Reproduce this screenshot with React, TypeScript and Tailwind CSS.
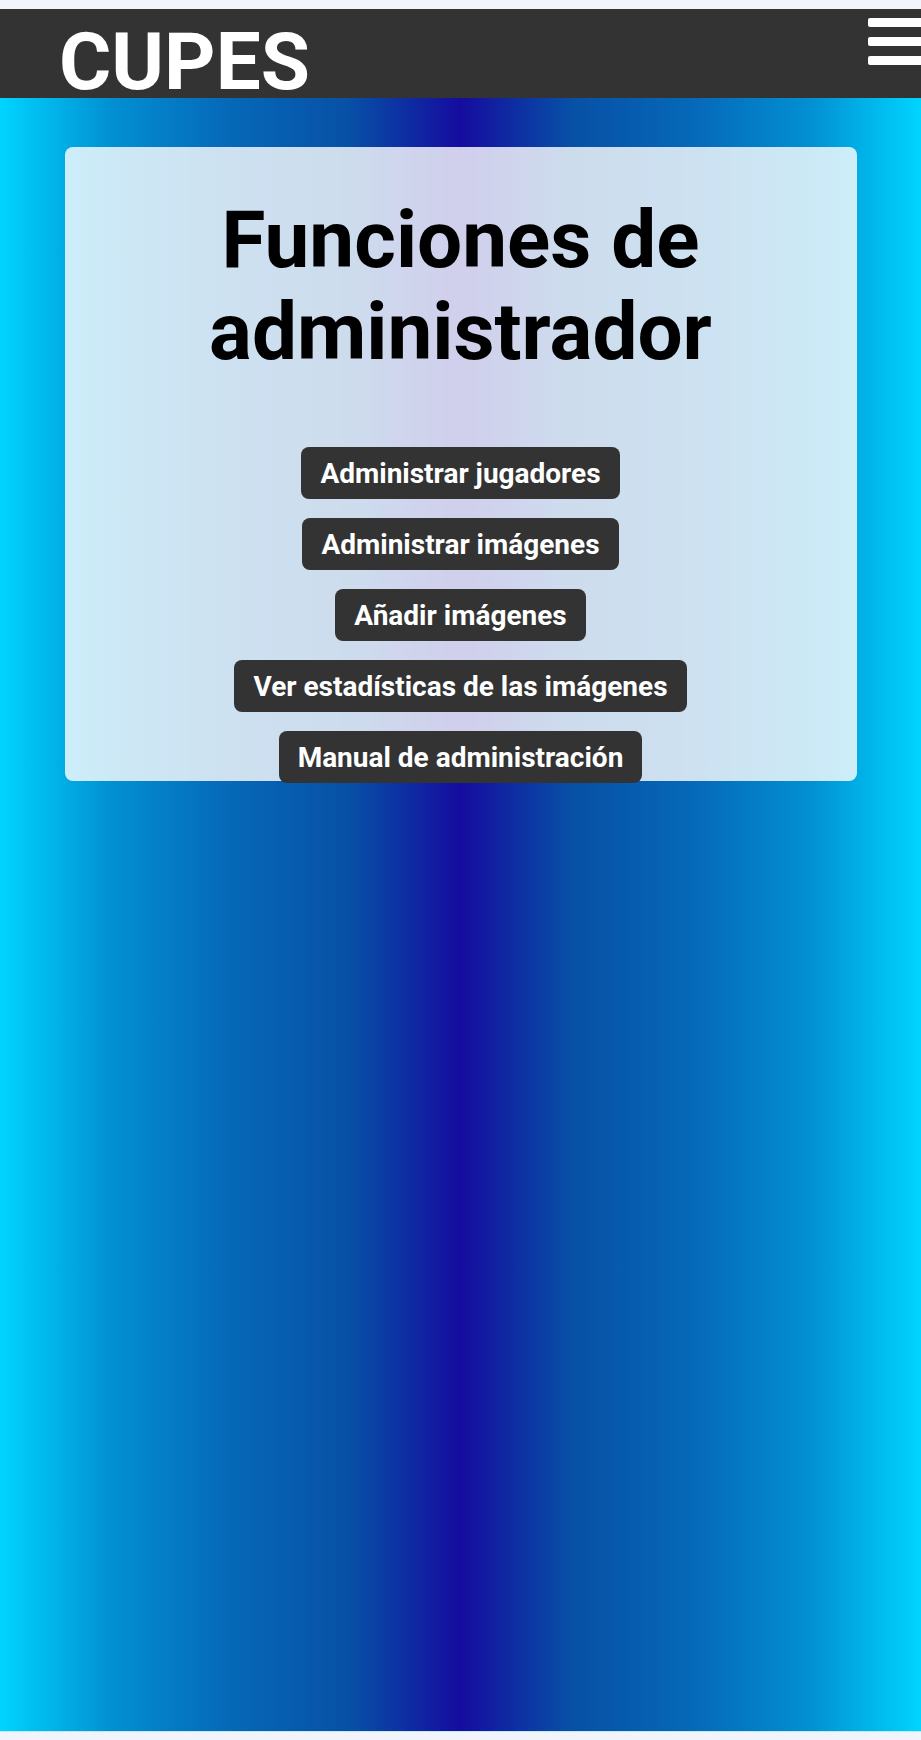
import React from "react";

const buttons = [
  "Administrar jugadores",
  "Administrar imágenes",
  "Añadir imágenes",
  "Ver estadísticas de las imágenes",
  "Manual de administración",
];

export default function App() {
  return (
    <div className="w-[921px] h-[1740px] flex flex-col overflow-hidden font-['Roboto','Liberation_Sans',sans-serif]">
      <div className="h-[9px] shrink-0 bg-[#f1f5fb]" />
      <header className="h-[89px] shrink-0 bg-[#333333] flex justify-between">
        <div className="pl-[59px] pt-[17px] text-[80px] leading-[72px] font-bold text-white">CUPES</div>
        <div className="flex flex-col gap-[10px] pt-[9px]">
          <div className="w-[53px] h-[9px] bg-white rounded-l-[2px]" />
          <div className="w-[53px] h-[9px] bg-white rounded-l-[2px]" />
          <div className="w-[53px] h-[9px] bg-white rounded-l-[2px]" />
        </div>
      </header>
      <main className="flex-1 bg-[linear-gradient(90deg,#00d4ff_0%,#0290d2_12%,#0668b8_25%,#0750a6_38%,#150c9f_50%,#0750a6_62%,#0668b8_75%,#0290d2_88%,#00d4ff_100%)] pt-[49px]">
        <section className="w-[792px] mx-auto bg-white/80 rounded-[8px] flex flex-col items-center pt-[47px]">
          <h1 className="text-[80px] leading-[92px] font-bold text-black text-center">
            Funciones de
            <br />
            administrador
          </h1>
          <div className="mt-[69px] flex flex-col items-center gap-[19px] -mb-[2px]">
            {buttons.map((b) => (
              <button
                key={b}
                className="h-[52px] px-[19px] rounded-[8px] bg-[#333333] text-white text-[28px] leading-[33px] font-bold flex items-center"
              >
                {b}
              </button>
            ))}
          </div>
        </section>
      </main>
      <div className="h-[9px] shrink-0 bg-[#f1f5fb] border-t border-[#bfeaf8]" />
    </div>
  );
}
